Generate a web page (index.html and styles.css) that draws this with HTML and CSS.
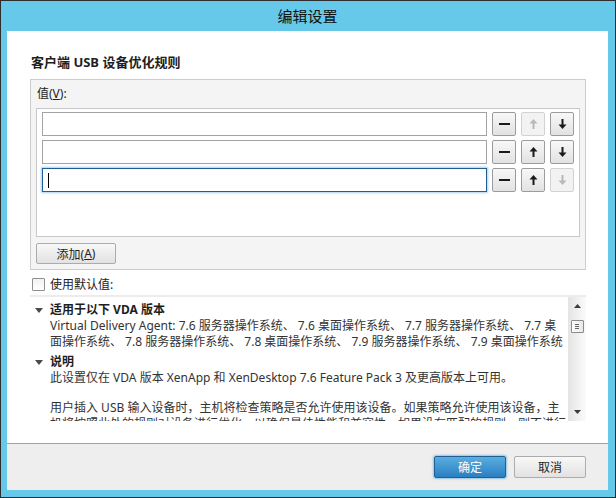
FILE: index.html
```html
<!DOCTYPE html>
<html lang="zh-CN">
<head>
<meta charset="utf-8">
<title>编辑设置</title>
<link rel="stylesheet" href="styles.css">
</head>
<body>
<div class="window">
  <div class="titlebar">编辑设置</div>
  <div class="client">
    <div class="main">
      <h1 class="heading">客户端 USB 设备优化规则</h1>
      <div class="group">
        <div class="group-label">值(<u>V</u>):</div>
        <div class="list">
          <div class="row">
            <div class="field"></div>
            <button class="btn sq"><span class="minus"></span></button>
            <button class="btn sq disabled"><svg class="arrow" viewBox="0 0 9 10" width="9" height="10"><polygon points="4.5,0 8.5,4.5 0.5,4.5"/><rect x="3.5" y="4" width="2" height="6"/></svg></button>
            <button class="btn sq"><svg class="arrow" viewBox="0 0 9 10" width="9" height="10"><polygon points="4.5,10 8.5,5.5 0.5,5.5"/><rect x="3.5" y="0" width="2" height="6"/></svg></button>
          </div>
          <div class="row">
            <div class="field"></div>
            <button class="btn sq"><span class="minus"></span></button>
            <button class="btn sq"><svg class="arrow" viewBox="0 0 9 10" width="9" height="10"><polygon points="4.5,0 8.5,4.5 0.5,4.5"/><rect x="3.5" y="4" width="2" height="6"/></svg></button>
            <button class="btn sq"><svg class="arrow" viewBox="0 0 9 10" width="9" height="10"><polygon points="4.5,10 8.5,5.5 0.5,5.5"/><rect x="3.5" y="0" width="2" height="6"/></svg></button>
          </div>
          <div class="row">
            <div class="field focused"><span class="caret"></span></div>
            <button class="btn sq"><span class="minus"></span></button>
            <button class="btn sq"><svg class="arrow" viewBox="0 0 9 10" width="9" height="10"><polygon points="4.5,0 8.5,4.5 0.5,4.5"/><rect x="3.5" y="4" width="2" height="6"/></svg></button>
            <button class="btn sq disabled"><svg class="arrow" viewBox="0 0 9 10" width="9" height="10"><polygon points="4.5,10 8.5,5.5 0.5,5.5"/><rect x="3.5" y="0" width="2" height="6"/></svg></button>
          </div>
        </div>
        <button class="btn add">添加(<u>A</u>)</button>
      </div>
      <div class="check"><span class="box"></span><span>使用默认值:</span></div>
      <div class="desc">
        <div class="desc-body">
          <div class="sec-head"><svg class="tri" viewBox="0 0 8 5" width="8" height="5"><polygon points="0,0 8,0 4,5"/></svg><b>适用于以下 VDA 版本</b></div>
          <div class="line">Virtual Delivery Agent: 7.6 服务器操作系统、 7.6 桌面操作系统、 7.7 服务器操作系统、 7.7 桌</div>
          <div class="line">面操作系统、 7.8 服务器操作系统、 7.8 桌面操作系统、 7.9 服务器操作系统、 7.9 桌面操作系统</div>
          <div class="sec-head sec2"><svg class="tri" viewBox="0 0 8 5" width="8" height="5"><polygon points="0,0 8,0 4,5"/></svg><b>说明</b></div>
          <div class="line">此设置仅在 VDA 版本 XenApp 和 XenDesktop 7.6 Feature Pack 3 及更高版本上可用。</div>
          <div class="line para">用户插入 USB 输入设备时，主机将检查策略是否允许使用该设备。如果策略允许使用该设备，主</div>
          <div class="line">机将按照此处的规则对设备进行优化，以确保最佳性能和兼容性。如果没有匹配的规则，则不进行</div>
        </div>
        <div class="scrollbar">
          <div class="sb-arrow"><svg viewBox="0 0 7 4" width="7" height="4"><polygon points="3.5,0 7,4 0,4"/></svg></div>
          <div class="thumb"><span></span><span></span><span></span></div>
          <div class="sb-track"></div>
          <div class="sb-arrow"><svg viewBox="0 0 7 4" width="7" height="4"><polygon points="0,0 7,0 3.5,4"/></svg></div>
        </div>
      </div>
    </div>
    <div class="footer">
      <button class="btn dlg primary">确定</button>
      <button class="btn dlg">取消</button>
    </div>
  </div>
</div>
</body>
</html>
```
FILE: styles.css
```css
html, body {
  margin: 0;
  padding: 0;
  background: #fff;
}
body {
  font-family: "Noto Sans", "Noto Sans CJK SC", sans-serif;
  font-size: 12px;
  color: #1e1e1e;
}
.window {
  width: 616px;
  height: 498px;
  box-sizing: border-box;
  border: 1px solid #2d2d2d;
  background: #66c9ea;
  padding: 0 7px 7px 6px;
  display: flex;
  flex-direction: column;
}
.titlebar {
  height: 30px;
  line-height: 30px;
  text-align: center;
  font-size: 15px;
  color: #111;
}
.client {
  flex: 1;
  background: #fff;
  display: flex;
  flex-direction: column;
  min-height: 0;
}
.main {
  flex: 1;
  padding: 22px 22px 0 23px;
  display: flex;
  flex-direction: column;
  min-height: 0;
}
.heading {
  margin: 0 0 8px;
  padding-left: 1px;
  font-size: 13px;
  font-weight: bold;
  line-height: 18px;
  color: #1e1e1e;
}
.group {
  border: 1px solid #cdcdcd;
  background: #f4f4f4;
  padding: 6px 5px 5px;
  display: flex;
  flex-direction: column;
}
.group-label {
  line-height: 16px;
  margin-bottom: 6px;
  padding-left: 1px;
  color: #222;
}
.list {
  height: 129px;
  box-sizing: border-box;
  border: 1px solid #c8c8c8;
  background: #fff;
  padding: 3px 5px;
  display: flex;
  flex-direction: column;
  gap: 4px;
}
.row {
  display: flex;
  gap: 5px;
  height: 24px;
}
.field {
  flex: 1;
  box-sizing: border-box;
  height: 24px;
  border: 1px solid #a3a3a3;
  background: #fff;
  display: flex;
  align-items: center;
  padding-left: 5px;
}
.field.focused {
  border-color: #1d5e9b;
  box-shadow: 0 0 2px 1px rgba(90, 160, 215, 0.5);
}
.caret {
  width: 1px;
  height: 15px;
  background: #000;
}
.btn {
  font-family: inherit;
  font-size: 12px;
  color: #1e1e1e;
  margin: 0;
  padding: 0;
  box-sizing: border-box;
  border: 1px solid #acacac;
  border-radius: 2px;
  background: linear-gradient(#f8f8f8, #e2e2e2);
  display: flex;
  align-items: center;
  justify-content: center;
}
.btn.sq {
  width: 24px;
  height: 24px;
  border-color: #9c9c9c;
}
.btn.sq .arrow {
  fill: #1a1a1a;
}
.btn.sq.disabled {
  border-color: #d2d2d2;
  background: #f2f2f2;
}
.btn.sq.disabled .arrow {
  fill: #b8b8b8;
}
.minus {
  width: 11px;
  height: 2px;
  background: #1a1a1a;
}
.btn.add {
  margin-top: 6px;
  align-self: flex-start;
  width: 80px;
  height: 21px;
}
.check {
  display: flex;
  align-items: center;
  height: 18px;
  margin-top: 5px;
  padding-left: 2px;
  color: #222;
}
.box {
  width: 13px;
  height: 13px;
  box-sizing: border-box;
  border: 1px solid #8e8f8f;
  border-radius: 1px;
  background: linear-gradient(#f2f2f2, #ffffff);
  margin-right: 5px;
}
.desc {
  margin-top: 2px;
  height: 126px;
  box-sizing: border-box;
  border-top: 2px solid #ececec;
  display: flex;
  overflow: hidden;
}
.desc-body {
  flex: 1;
  min-width: 0;
  overflow: hidden;
  padding: 5px 0 0 5px;
  color: #333;
  line-height: 16px;
  white-space: nowrap;
}
.sec-head {
  display: flex;
  align-items: center;
  color: #1e1e1e;
}
.sec-head b {
  font-weight: bold;
}
.sec2 {
  margin-top: 4px;
}
.tri {
  fill: #4a4a4a;
  margin-right: 7px;
}
.line {
  padding-left: 15px;
  overflow: hidden;
}
.para {
  margin-top: 14px;
}
.scrollbar {
  width: 18px;
  flex: none;
  display: flex;
  flex-direction: column;
  align-items: center;
  background: linear-gradient(to right, #e4e4e4, #fbfbfb);
}
.sb-arrow {
  height: 18px;
  width: 18px;
  display: flex;
  align-items: center;
  justify-content: center;
  fill: #3c3c3c;
}
.thumb {
  margin-top: 5px;
  width: 13px;
  height: 13px;
  box-sizing: border-box;
  border: 1px solid #8c8c8c;
  border-radius: 1px;
  background: linear-gradient(to right, #fdfdfd, #e9e9e9);
  display: flex;
  flex-direction: column;
  align-items: center;
  justify-content: center;
  gap: 1px;
}
.thumb span {
  width: 4px;
  height: 1px;
  background: #666;
}
.sb-track {
  flex: 1;
}
.footer {
  height: 47px;
  box-sizing: border-box;
  border-top: 1px solid #9da3a9;
  background: #eeeeee;
  padding: 12px 22px 0 0;
  display: flex;
  justify-content: flex-end;
  align-items: flex-start;
  gap: 8px;
}
.btn.dlg {
  width: 72px;
  height: 22px;
}
.btn.primary {
  color: #fff;
  border-color: #1f5f96;
  background: linear-gradient(#5aaee0, #2a7fc1);
  box-shadow: 0 0 2px 1px rgba(70, 160, 220, 0.55);
}
```
